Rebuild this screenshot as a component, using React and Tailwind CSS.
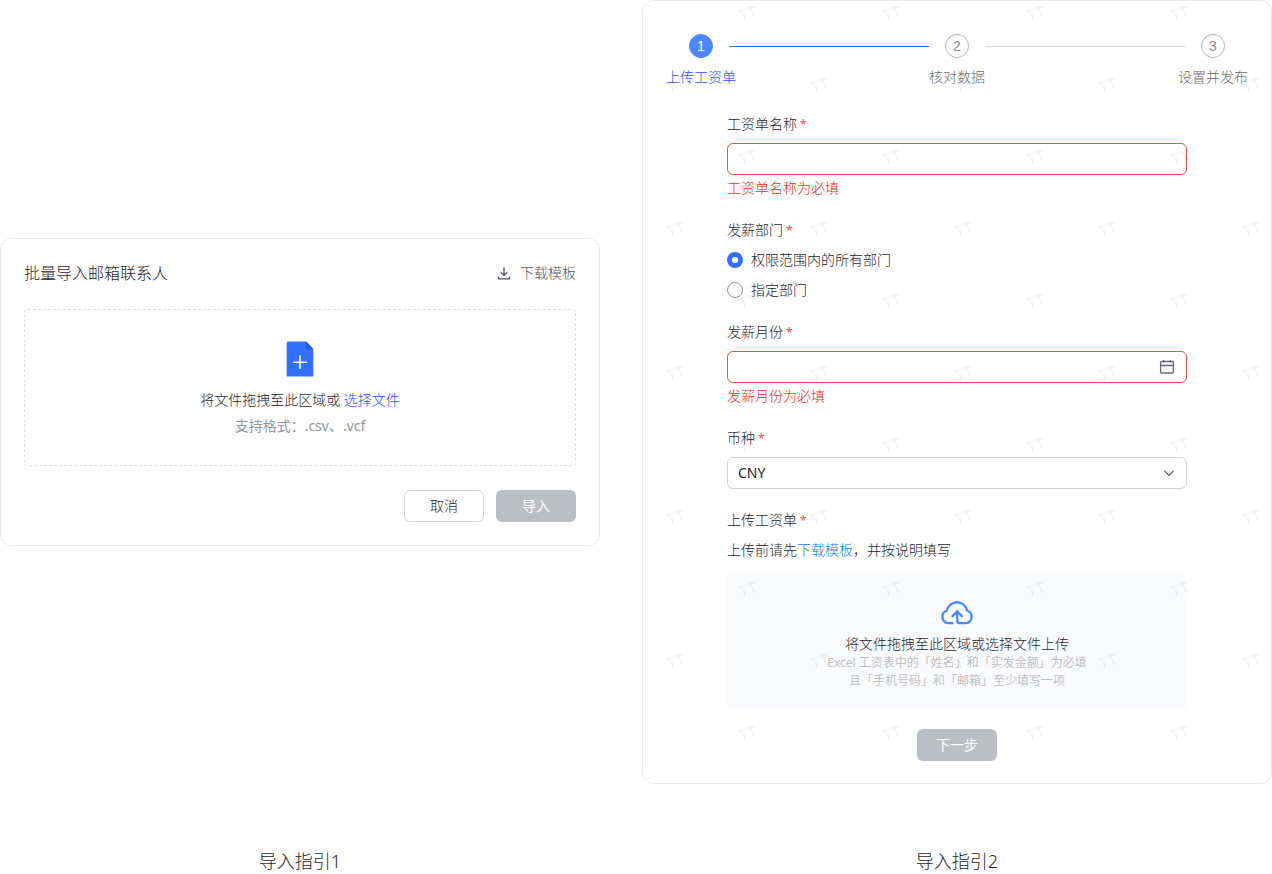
import { useState } from "react";

const STEPS = ["上传工资单", "核对数据", "设置并发布"];

const DEPARTMENTS = [
  { value: "all", label: "权限范围内的所有部门" },
  { value: "custom", label: "指定部门" },
];

const DownloadIcon = () => (
  <svg className="w-3.5 h-3.5" viewBox="0 0 14 14" fill="none" stroke="currentColor">
    <path d="M7 1.5V9M3.800 6.200L7 9.400l3.200-3.200" strokeWidth="1.3" />
    <path d="M1.500 10.700v2.200h11v-2.200" strokeWidth="1.3" strokeLinejoin="round" />
  </svg>
);

const FileAddIcon = () => (
  <svg className="w-7 h-9" viewBox="0 0 28 36">
    <path
      d="M2 .5h18l7.300 7.300V34.200c0 .8-.5 1.300-1.300 1.300H2c-.8 0-1.300-.5-1.300-1.300V1.800C.7 1 1.200.5 2 .5z"
      fill="#3370ff"
    />
    <path d="M20 .5l7.300 7.300h-6.100c-.7 0-1.200-.5-1.200-1.200z" fill="#245bdb" />
    <path d="M14 14.500v13.500M7.200 21.200h13.600" stroke="#fff" strokeWidth="1.6" />
  </svg>
);

const CalendarIcon = () => (
  <svg className="w-4 h-4" viewBox="0 0 16 16" fill="none" stroke="currentColor" strokeWidth="1.3">
    <rect x="1.6" y="2.5" width="12.8" height="11.5" rx="1" />
    <path d="M1.6 6.500h12.800M4.600 1v2.500M11.400 1v2.500" />
  </svg>
);

const ChevronIcon = () => (
  <svg className="w-3 h-3" viewBox="0 0 12 12" fill="none" stroke="currentColor" strokeWidth="1.3">
    <path d="M1.400 3.700L6 8.300l4.600-4.600" />
  </svg>
);

const CloudUploadIcon = () => (
  <svg className="w-[34px] h-6" viewBox="0 1 32 23" fill="none" stroke="#4c88ff" strokeWidth="2.2">
    <path d="M12.500 22.300H7.500a6.300 6.300 0 0 1-1.200-12.200 9.900 9.900 0 0 1 19.400 0 6.300 6.300 0 0 1-1.200 12.200h-5.400c-1.800 0-2.900-1.100-2.900-2.900V11" />
    <path d="M11 16.200l5.200-5.200 5.200 5.200" />
  </svg>
);

const Watermark = () => (
  <svg className="absolute inset-0 w-full h-full pointer-events-none" aria-hidden="true">
    <defs>
      <pattern id="watermark" width="144" height="144" patternUnits="userSpaceOnUse">
        <g
          className="font-['Liberation_Sans',sans-serif]"
          fontSize="16"
          fill="#000"
          fillOpacity="0.06"
          textAnchor="middle"
        >
          <text transform="translate(107 18) rotate(-20)">TT</text>
          <text transform="translate(35 90) rotate(-20)">TT</text>
        </g>
      </pattern>
    </defs>
    <rect width="100%" height="100%" fill="url(#watermark)" />
  </svg>
);

const Required = () => <span className="ml-[3px] text-xs font-normal text-[#f54a45]">*</span>;

const ImportContacts = () => (
  <section className="rounded-xl border border-[#e8e9eb] p-[23px]">
    <div className="flex justify-between items-center mb-[25px]">
      <h2 className="text-base leading-[22px]">批量导入邮箱联系人</h2>
      <button type="button" className="flex items-center gap-[9px] text-[#51565d] leading-[22px]">
        <DownloadIcon />
        下载模板
      </button>
    </div>
    <div className="flex flex-col items-center rounded border border-dashed border-[#dee0e3] pt-[31px] pb-7">
      <FileAddIcon />
      <p className="mt-3 leading-[22px]">
        将文件拖拽至此区域或{" "}
        <a href="#file" className="text-[#2452ff]">
          选择文件
        </a>
      </p>
      <p className="mt-1 leading-[22px] font-normal text-[#8f959e]">支持格式：.csv、.vcf</p>
    </div>
    <div className="mt-6 flex justify-end gap-3">
      <button type="button" className="w-20 h-8 rounded-md border border-[#d0d3d6]">
        取消
      </button>
      <button type="button" className="w-20 h-8 rounded-md bg-[#bbbfc4] text-white font-normal">
        导入
      </button>
    </div>
  </section>
);

const StepCircle = ({ number, active }) => (
  <span
    className={`flex w-6 h-6 shrink-0 items-center justify-center rounded-full border font-['Liberation_Sans',sans-serif] ${
      active ? "border-[#4c88ff] bg-[#4c88ff] text-white" : "border-[#b8b8b8] text-[#8c8c8c]"
    }`}
  >
    {number}
  </span>
);

const PayrollForm = () => {
  const [name, setName] = useState("");
  const [month, setMonth] = useState("");
  const [department, setDepartment] = useState("all");

  return (
    <section className="relative rounded-xl border border-[#e8e9eb] px-[23px] pt-[33px] pb-[22px]">
      {/* Steps */}
      <div className="flex items-center gap-4 px-[23px]">
        <StepCircle number={1} active />
        <span className="h-px flex-1 bg-[#3370ff]" />
        <StepCircle number={2} />
        <span className="h-px flex-1 bg-[#d4d4d4]" />
        <StepCircle number={3} />
      </div>
      <div className="mt-[9px] flex justify-between leading-5">
        {STEPS.map((step, index) => (
          <span key={step} className={index === 0 ? "text-[#2c50f5]" : "text-[#6e6e6e]"}>
            {step}
          </span>
        ))}
      </div>

      <form className="mx-auto mt-[26px] flex max-w-[460px] flex-col gap-5 leading-[22px]">
        <div>
          <label htmlFor="name" className="block mb-2">
            工资单名称
            <Required />
          </label>
          <input
            id="name"
            type="text"
            value={name}
            onChange={(e) => setName(e.target.value)}
            className="block w-full h-8 rounded-md border border-[#f54a45] px-[10px] outline-none"
          />
          {!name && <p className="mt-0.5 text-[#f02a25]">工资单名称为必填</p>}
        </div>

        <fieldset>
          <legend className="mb-2">
            发薪部门
            <Required />
          </legend>
          <div className="flex flex-col gap-2">
            {DEPARTMENTS.map((item) => (
              <label key={item.value} className="flex items-center gap-2">
                <input
                  type="radio"
                  name="department"
                  checked={department === item.value}
                  onChange={() => setDepartment(item.value)}
                  className="w-4 h-4 appearance-none rounded-full border border-[#8f959e] checked:border-[5px] checked:border-[#3370ff]"
                />
                {item.label}
              </label>
            ))}
          </div>
        </fieldset>

        <div>
          <label htmlFor="month" className="block mb-2">
            发薪月份
            <Required />
          </label>
          <div className="flex h-8 items-center rounded-md border border-[#f54a45] pl-[10px] pr-[11px] text-[#646a73]">
            <input
              id="month"
              type="text"
              value={month}
              onChange={(e) => setMonth(e.target.value)}
              className="min-w-0 flex-1 outline-none"
            />
            <CalendarIcon />
          </div>
          {!month && <p className="mt-0.5 text-[#f02a25]">发薪月份为必填</p>}
        </div>

        <div>
          <label htmlFor="currency" className="block mb-2">
            币种
            <Required />
          </label>
          <div className="relative">
            <select
              id="currency"
              className="block w-full h-8 appearance-none rounded-md border border-[#d0d3d6] px-[10px] font-normal outline-none"
            >
              <option>CNY</option>
            </select>
            <span className="absolute right-3 top-[10px] text-[#646a73] pointer-events-none">
              <ChevronIcon />
            </span>
          </div>
        </div>

        <div>
          <p className="mb-2">
            上传工资单
            <Required />
          </p>
          <p>
            上传前请先
            <a href="#template" className="text-[#0080ff]">
              下载模板
            </a>
            ，并按说明填写
          </p>
          <div className="mt-3 flex flex-col items-center bg-[#fafbff] pt-7 pb-[19px] text-center">
            <CloudUploadIcon />
            <p className="mt-[9px] leading-5">将文件拖拽至此区域或选择文件上传</p>
            <p className="text-xs leading-[18px] font-normal text-[#bfbfbf]">
              Excel 工资表中的「姓名」和「实发金额」为必填
              <br />
              且「手机号码」和「邮箱」至少填写一项
            </p>
          </div>
        </div>

        <button
          type="button"
          className="mx-auto w-20 h-8 rounded-md bg-[#bbbfc4] text-white font-normal"
        >
          下一步
        </button>
      </form>
      <Watermark />
    </section>
  );
};

const App = () => {
  return (
    <main className="grid grid-cols-[600fr_630fr] items-center gap-x-[42px] gap-y-[65px] bg-white font-['Noto_Sans','Noto_Sans_CJK_SC',sans-serif] text-sm font-light text-[#1f2329]">
      <ImportContacts />
      <PayrollForm />
      <p className="text-center text-lg leading-6">导入指引1</p>
      <p className="text-center text-lg leading-6">导入指引2</p>
    </main>
  );
};

export default App;
